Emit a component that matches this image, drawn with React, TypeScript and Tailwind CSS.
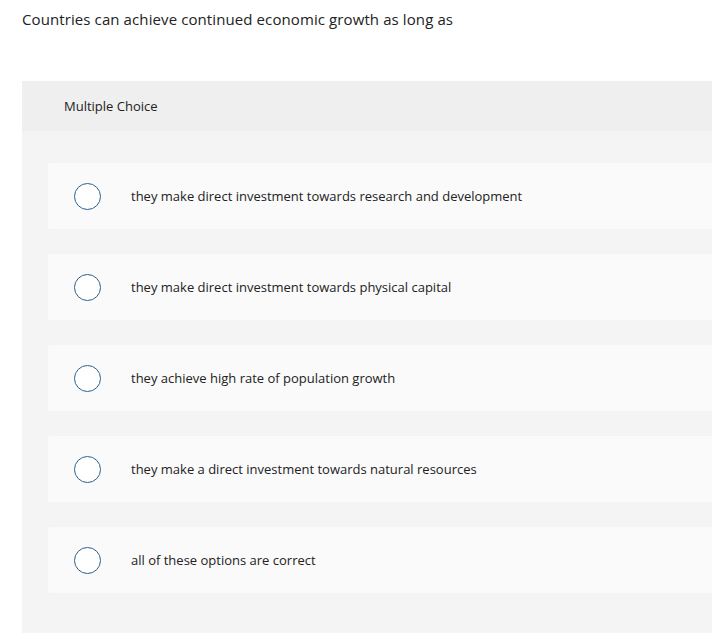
const options = [
  "they make direct investment towards research and development",
  "they make direct investment towards physical capital",
  "they achieve high rate of population growth",
  "they make a direct investment towards natural resources",
  "all of these options are correct",
];

export default function App() {
  return (
    <div className="min-h-screen bg-white font-['Open_Sans',sans-serif] text-[#1a1a1a] overflow-hidden">
      {/* Question */}
      <div className="pl-[22px] pt-[9px] h-[81px]">
        <p className="text-[15px] leading-[20px] text-[#222] tracking-[0.1px]">
          Countries can achieve continued economic growth as long as
        </p>
      </div>

      {/* Answer panel */}
      <div className="ml-[22px] bg-[#f4f4f4] h-[552px]">
        <div className="h-[50px] bg-[#efefef] flex items-center pl-[42px]">
          <span className="text-[13px] text-[#222] mt-[2px]">Multiple Choice</span>
        </div>

        <div className="flex flex-col gap-[25px] pt-[32px] pl-[26px]">
          {options.map((o) => (
            <div
              key={o}
              className="h-[66px] bg-[#fafafa] rounded-l-[3px] flex items-center"
            >
              <div className="w-[27px] h-[27px] ml-[26px] rounded-full border-[1.5px] border-[#2d5f8f] bg-white" />
              <span className="ml-[30px] mt-[2px] text-[13px] text-[#222]">{o}</span>
            </div>
          ))}
        </div>
      </div>
    </div>
  );
}
